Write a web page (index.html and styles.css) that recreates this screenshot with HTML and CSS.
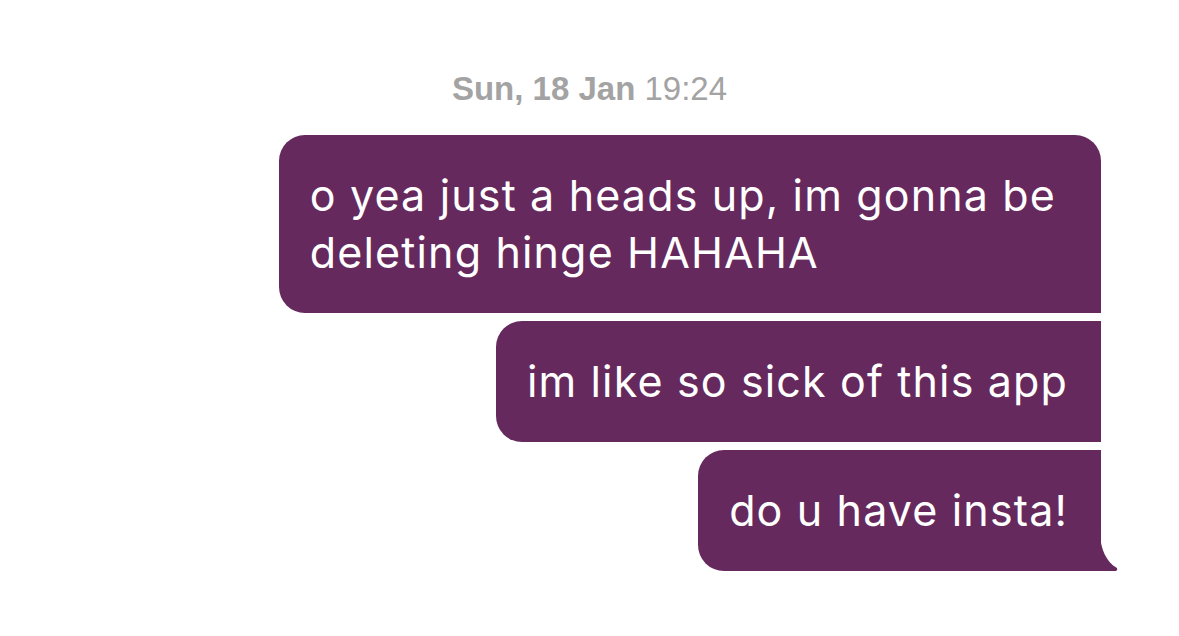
FILE: index.html
```html
<!DOCTYPE html>
<html lang="en">
<head>
    <meta charset="UTF-8">
    <meta name="viewport" content="width=device-width, initial-scale=1.0">
    <title>Chat</title>
    <link rel="stylesheet" href="styles.css">
</head>
<body>
    <div class="chat">
        <!-- 时间戳 -->
        <div class="timestamp"><span class="day">Sun, 18 Jan</span> 19:24</div>

        <div class="thread">
            <div class="bubble first">o yea just a heads up, im gonna be<br>deleting hinge HAHAHA</div>
            <div class="bubble middle">im like so sick of this app</div>
            <div class="bubble last">
                do u have insta!
                <svg class="tail" width="18" height="36" viewBox="0 0 18 36">
                    <path d="M0 0 C1 14 6 27 17 33 Q18 35 16 36 L0 36 Z" fill="#66295d"/>
                </svg>
            </div>
        </div>
    </div>
</body>
</html>
```

FILE: styles.css
```css
* {
    margin: 0;
    padding: 0;
    box-sizing: border-box;
}

body {
    font-family: Inter, 'Noto Sans', sans-serif;
    background-color: #FFFFFF;
    width: 1179px;
    height: 636px;
    overflow: hidden;
}

.chat {
    display: flex;
    flex-direction: column;
    padding-top: 69px;
}

.timestamp {
    font-family: 'Liberation Sans', Arial, sans-serif;
    font-size: 33px;
    color: #a3a3a3;
    text-align: center;
    line-height: 40px;
}

.timestamp .day {
    font-weight: bold;
}

.thread {
    display: flex;
    flex-direction: column;
    align-items: flex-end;
    gap: 8px;
    padding-right: 78px;
    margin-top: 26px;
}

.bubble {
    position: relative;
    background-color: #66295d;
    color: #ffffff;
    font-size: 43px;
    letter-spacing: 1.15px;
    line-height: 57px;
    padding: 32px 33px 32px 31px;
    border-radius: 26px;
    white-space: nowrap;
}

.bubble.first {
    border-bottom-right-radius: 0;
    padding-right: 45px;
}

.bubble.middle {
    border-top-right-radius: 0;
    border-bottom-right-radius: 0;
}

.bubble.last {
    border-top-right-radius: 0;
    border-bottom-right-radius: 0;
}

.tail {
    position: absolute;
    right: -17px;
    bottom: 0;
    display: block;
}
```
